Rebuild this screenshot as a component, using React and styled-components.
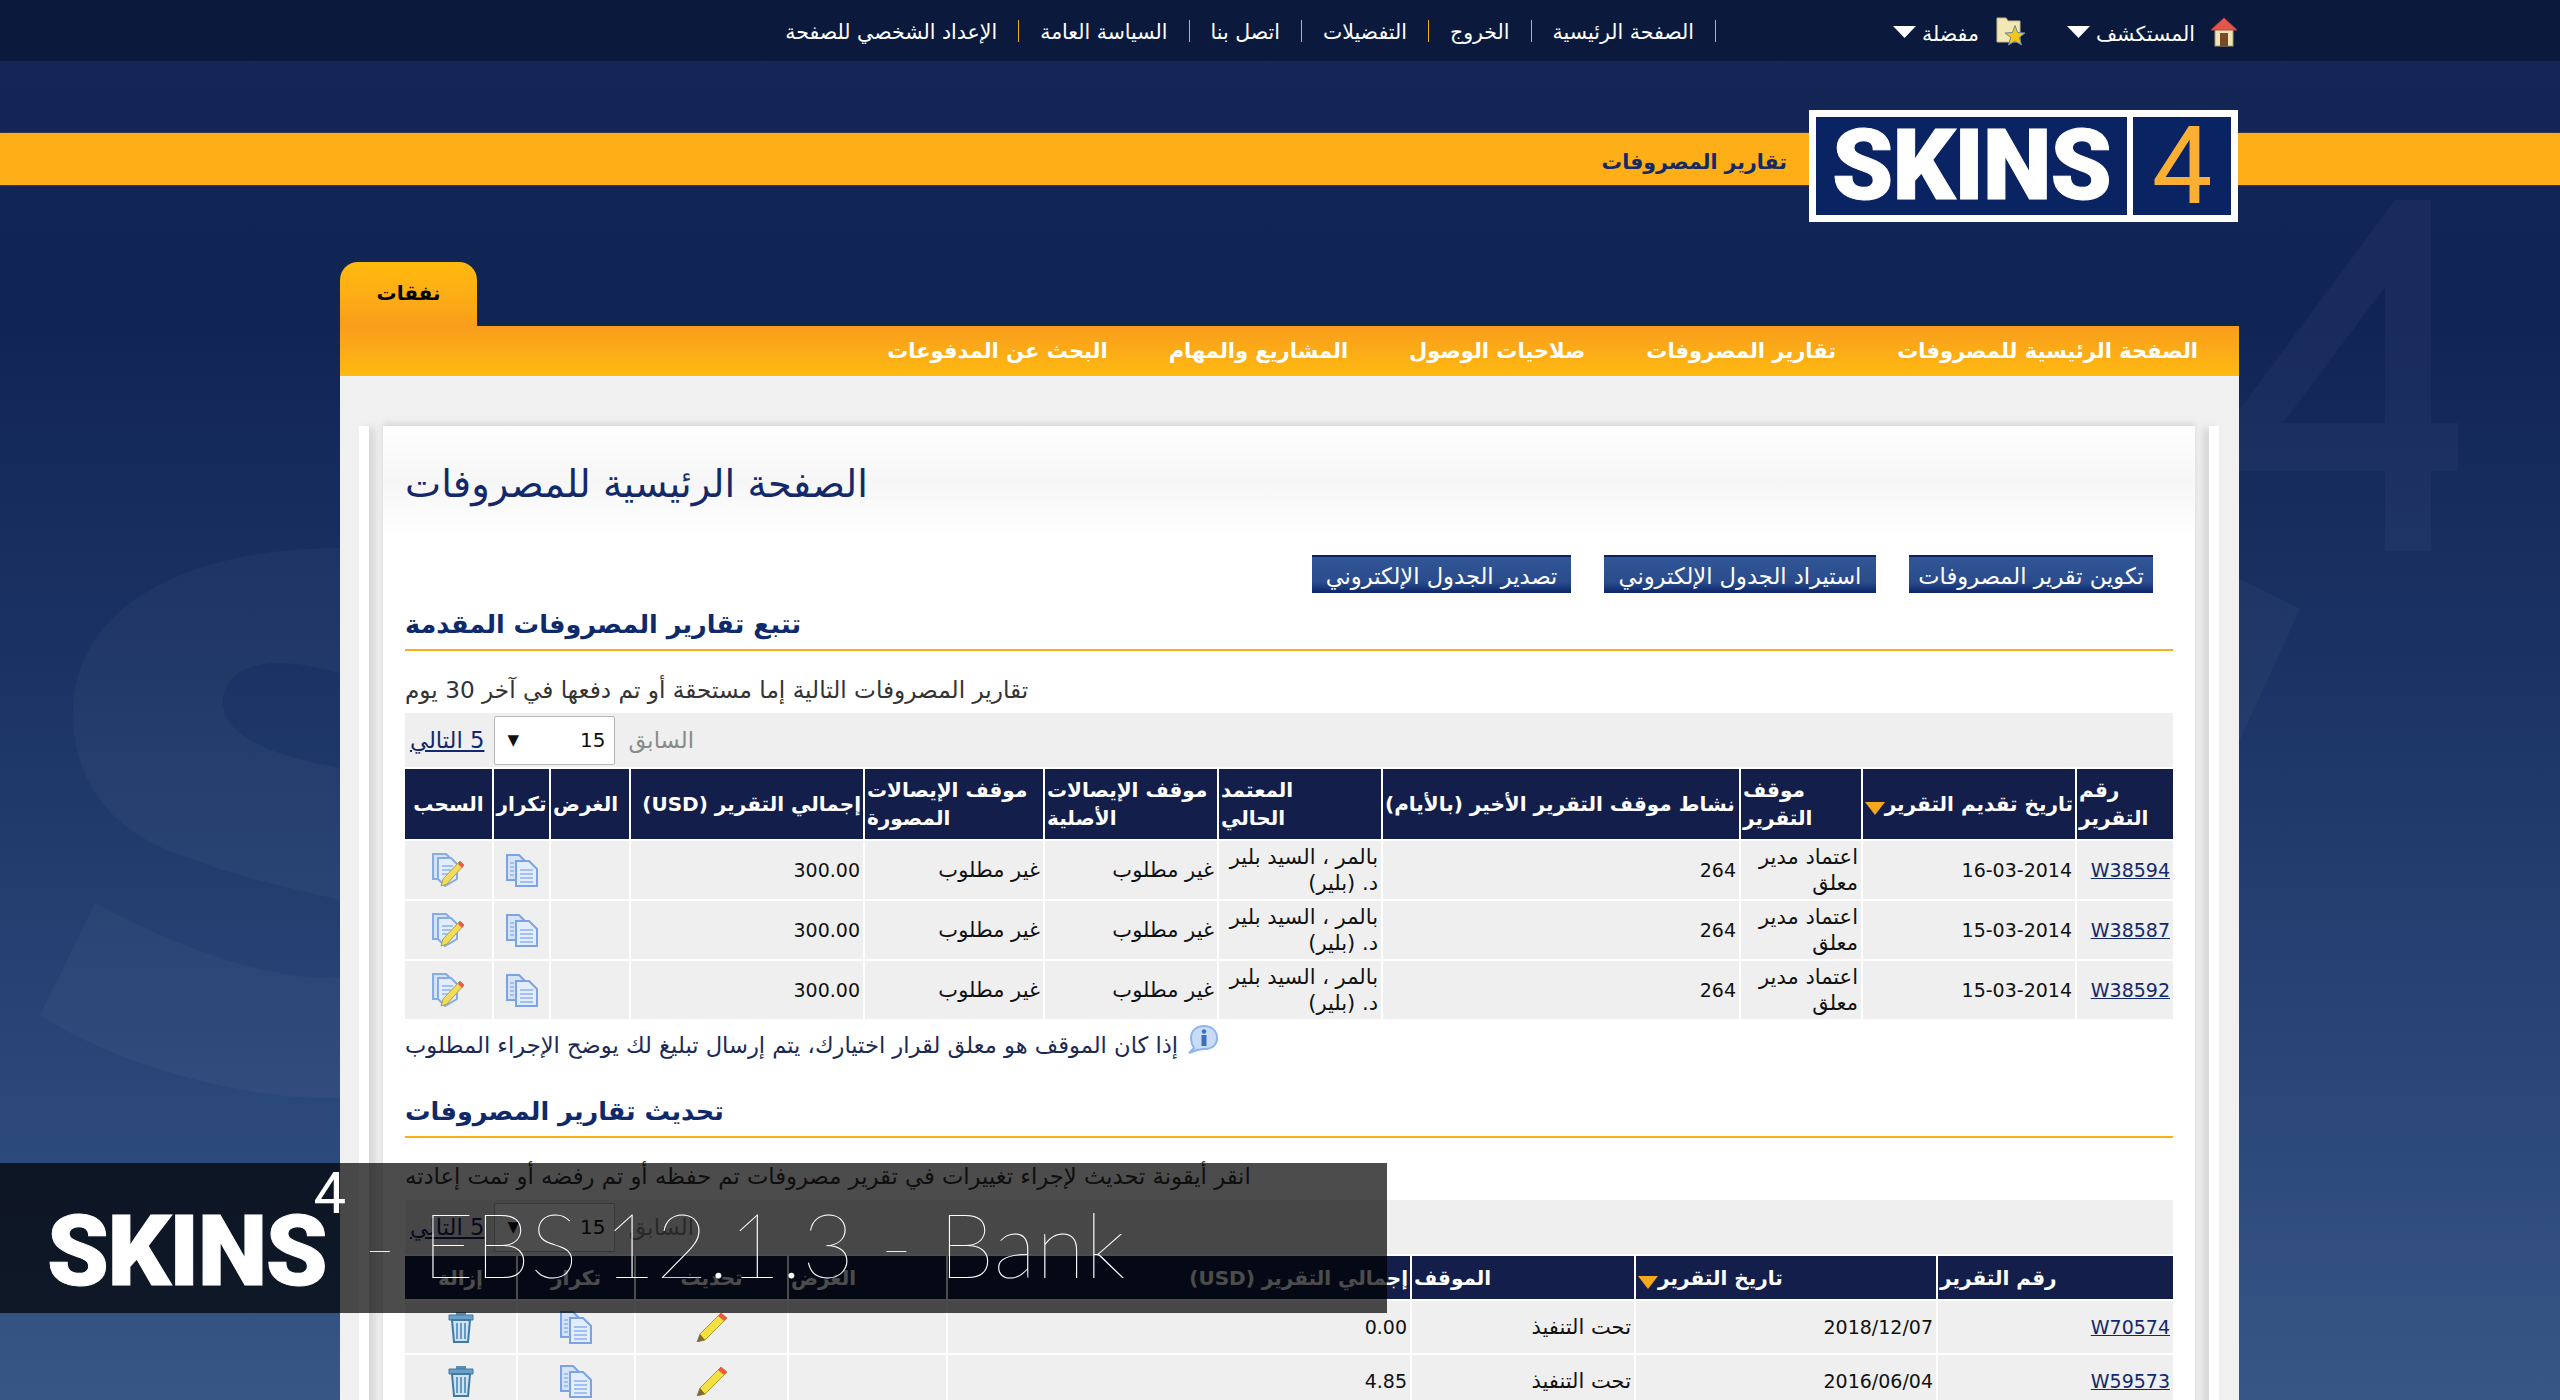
import React from 'react';
import styled, { createGlobalStyle } from 'styled-components';

const ARABIC = '"DejaVu Sans", "Noto Sans", sans-serif';

// === STYLES === //

const GlobalStyle = createGlobalStyle`
  html, body {
    margin: 0;
    padding: 0;
    height: 1400px;
    overflow: hidden;
    background: #13275a;
  }
  * { box-sizing: border-box; }
`;

const Page = styled.div`
  position: relative;
  width: 2560px;
  height: 1400px;
  overflow: hidden;
  font-family: ${ARABIC};
  background: linear-gradient(to bottom, #132656 0, #112555 320px, #1a3263 640px, #2d4a7c 1160px, #375685 1400px);
`;

const Watermark = styled.svg`
  position: absolute;
  inset: 0;
  width: 2560px;
  height: 1400px;
`;

const TopBar = styled.header`
  position: relative;
  display: flex;
  align-items: center;
  height: 61px;
  padding-right: 322px;
  background: #0b1a3c;
  color: #fff;
`;

const UserMenu = styled.div`
  display: flex;
  align-items: center;
  gap: 15px;
  margin-left: 41px;
  padding-top: 3px;
  font-size: 20.5px;
`;

const UserLabel = styled.span`
  margin-left: -9px;
  padding-top: 4px;
`;

const TopLinks = styled.nav`
  display: flex;
  align-items: center;
  margin-right: 136px;
`;

const TopLink = styled.a`
  height: 22px;
  padding: 0 21px;
  border-right: 1px solid #f5ab1e;
  font-size: 20.5px;
  line-height: 24px;
  color: #fff;
  white-space: nowrap;
`;

const Hero = styled.div`
  position: relative;
  height: 201px;
  padding-top: 72px;
`;

const YellowBar = styled.div`
  display: flex;
  align-items: center;
  height: 52px;
  padding: 6px 773px 0 0;
  background: #feae16;
  box-shadow: 0 0 2px #6b5a30;
  font-size: 20.5px;
  font-weight: bold;
  color: #142a63;
`;

const Logo = styled.div`
  position: absolute;
  top: 49px;
  right: 322px;
  display: flex;
  gap: 6px;
  width: 429px;
  height: 112px;
  padding: 7px;
  background: #fff;
  direction: ltr;
`;

const LogoPanel = styled.div`
  display: flex;
  align-items: center;
  justify-content: center;
  flex: ${(props) => (props.$grow ? 1 : '0 0 98px')};
  background: #0a2463;
  overflow: hidden;
  font-family: Roboto, sans-serif;
  font-weight: ${(props) => (props.$grow ? 900 : 400)};
  font-size: ${(props) => (props.$grow ? '98px' : '108px')};
  letter-spacing: ${(props) => (props.$grow ? '-1px' : '0')};
  -webkit-text-stroke: ${(props) => (props.$grow ? '1px #fff' : '0')};
  line-height: 1;
  color: ${(props) => (props.$grow ? '#fff' : '#fbb034')};
`;

const Shell = styled.div`
  position: relative;
  display: flex;
  flex-direction: column;
  width: 1899px;
  margin-right: 321px;
`;

const Tab = styled.div`
  align-self: flex-end;
  display: flex;
  align-items: center;
  justify-content: center;
  width: 137px;
  height: 64px;
  padding-bottom: 3px;
  border-radius: 18px 18px 0 0;
  background: linear-gradient(to bottom, #ffba0d, #fdae15 50%, #f99d1c);
  font-size: 20px;
  font-weight: bold;
  color: #000;
`;

const MainNav = styled.nav`
  display: flex;
  align-items: center;
  gap: 61px;
  height: 50px;
  padding-right: 41px;
  background: linear-gradient(to bottom, #f99d1c, #ffba12);
`;

const MainNavLink = styled.a`
  font-size: 21px;
  font-weight: bold;
  color: #fff;
  white-space: nowrap;
`;

const Body = styled.div`
  display: flex;
  gap: 14px;
  height: 1100px;
  padding: 50px 20px 0 19px;
  background: #f0f0f0;
`;

const Gutter = styled.div`
  flex: 0 0 10px;
  background: #fff;
  box-shadow: ${(props) => props.$shadow}px 0 8px -2px rgba(0, 0, 0, 0.18);
`;

const Main = styled.main`
  flex: 1;
  padding: 0 22px;
  background: linear-gradient(to bottom, #fff 0, #f6f6f6 55px, #fff 110px);
  box-shadow: 0 -3px 6px rgba(0, 0, 0, 0.1);
`;

const Title = styled.h1`
  display: flex;
  align-items: center;
  justify-content: flex-end;
  height: 114px;
  margin: 0;
  font-size: 38.4px;
  font-weight: normal;
  color: #13296a;
`;

const ButtonRow = styled.div`
  display: flex;
  gap: 33px;
  height: 38px;
  margin-top: 15px;
  padding-right: 20px;
`;

const Button = styled.div`
  width: ${(props) => props.$w}px;
  height: 38px;
  overflow: hidden;
  border-top: 2px solid #0b2163;
  background: linear-gradient(to bottom, #315595, #2a4c8d 70%, #0c2668);
  font-size: 22.6px;
  line-height: 38px;
  text-align: center;
  color: #fff;
  white-space: nowrap;
`;

const SectionHeading = styled.h2`
  display: flex;
  align-items: flex-end;
  justify-content: flex-end;
  height: ${(props) => props.$height}px;
  margin: 0;
  padding-bottom: 10px;
  border-bottom: 2px solid #feae16;
  font-size: 25.5px;
  font-weight: bold;
  color: #0f2a6a;
`;

const Description = styled.p`
  display: flex;
  align-items: center;
  justify-content: flex-end;
  height: 62px;
  margin: 0;
  padding-top: 14px;
  font-size: ${(props) => props.$size}px;
  color: #333;
`;

const Pager = styled.div`
  display: flex;
  align-items: center;
  justify-content: flex-end;
  height: 54px;
  padding-left: 5px;
  background: #efefef;
  font-size: 22.7px;
`;

const PrevLabel = styled.span`
  color: #8a8a8a;
`;

const PageSelect = styled.div`
  display: flex;
  align-items: center;
  justify-content: space-between;
  width: 121px;
  height: 49px;
  margin: 0 13px 0 10px;
  padding: 0 9px 0 12px;
  border: 1px solid #b8b8b8;
  border-radius: 2px;
  background: #fff;
  font-size: 20px;
  color: #111;
`;

const Arrow = styled.span`
  font-size: 15px;
`;

const Link = styled.a`
  color: #12296b;
  text-decoration: underline;
`;

const Table = styled.table`
  table-layout: fixed;
  width: 1772px;
  margin: 0 -2px;
  border-collapse: separate;
  border-spacing: 2px;
`;

const Head = styled.th`
  width: ${(props) => props.$w}px;
  height: ${(props) => props.$height}px;
  padding: 0 2px;
  background: #131f4a;
  font-size: 20px;
  font-weight: bold;
  line-height: 28px;
  text-align: ${(props) => props.$align || 'left'};
  white-space: ${(props) => (props.$nowrap ? 'nowrap' : 'pre-line')};
  color: #fff;
`;

const SortMark = styled.svg`
  width: 20px;
  height: 13px;
  vertical-align: -4px;
`;

const Cell = styled.td`
  height: ${(props) => props.$height}px;
  padding: 0 3px;
  background: #efefef;
  font-size: ${(props) => (props.$arabic ? '21px' : '19px')};
  line-height: 26px;
  text-align: right;
  color: #111;
  vertical-align: middle;

  svg {
    display: block;
    margin: 0 auto;
  }
`;

const Note = styled.div`
  display: flex;
  align-items: flex-start;
  justify-content: flex-end;
  gap: 10px;
  height: 51px;
  padding-top: 4px;
  font-size: 22.6px;
  color: #1a2a55;
`;

const NoteText = styled.span`
  padding-top: 7px;
`;

const Banner = styled.div`
  position: absolute;
  top: 1163px;
  left: 0;
  display: flex;
  align-items: center;
  width: 1387px;
  height: 150px;
  padding-left: 47px;
  background: rgba(0, 0, 0, 0.7);
  color: #fff;
  direction: ltr;
`;

const BannerLogo = styled.div`
  position: relative;
  margin-top: 26px;
  font-family: Roboto, sans-serif;
  font-size: 99px;
  font-weight: 900;
  letter-spacing: -1.5px;
  -webkit-text-stroke: 1px #fff;
  line-height: 1;
`;

const BannerFour = styled.span`
  position: absolute;
  top: -38px;
  right: -20px;
  font-size: 58px;
  font-weight: 400;
  letter-spacing: 0;
  -webkit-text-stroke: 0;
`;

const BannerTitle = styled.div`
  margin: 10px 0 0 37px;
  font-family: Lato, Roboto, sans-serif;
  font-size: 90px;
  font-weight: 100;
  line-height: 1;
  white-space: pre;
`;

// === ICONS === //

const HouseIcon = () => (
  <svg width="28" height="30" viewBox="0 0 28 30">
    <rect x="5" y="12" width="18" height="17" fill="#efe3b8" stroke="#a89a6c" />
    <rect x="10" y="16" width="8" height="13" fill="#7a4a26" />
    <path d="M14 1 L27 13 L1 13 Z" fill="#e2574c" stroke="#b9433a" />
  </svg>
);

const FolderStarIcon = () => (
  <svg width="32" height="30" viewBox="0 0 32 30">
    <path d="M3 1 h9 l2 3 h12 v21 H3 Z" fill="#f2e7b5" stroke="#c9b980" />
    <path d="M21 8.5 L23.6 15.5 L31 16 L25.3 20.5 L27.5 28 L21 24 L14.5 28 L16.7 20.5 L11 16 L18.4 15.5 Z" fill="#f5c518" stroke="#5f8aa8" />
  </svg>
);

const DownTriangle = () => (
  <svg width="23" height="12" viewBox="0 0 23 12">
    <path d="M0 0 H23 L11.5 12 Z" fill="#fff" />
  </svg>
);

const SortIcon = () => (
  <SortMark viewBox="0 0 20 13">
    <path d="M0 0 H20 L10 13 Z" fill="#f6a81c" />
  </SortMark>
);

const CopyIcon = () => (
  <svg width="34" height="34" viewBox="0 0 34 34">
    <path d="M2 2 h12 l5 5 v20 H2 Z" fill="#d5e3fa" stroke="#7ba3e6" strokeWidth="2" />
    <path d="M11 8 h13 l8 8 v17 H11 Z" fill="#e3edfc" stroke="#7ba3e6" strokeWidth="2" />
    <path d="M15 17 h13 M15 21 h13 M15 25 h13 M15 29 h13" stroke="#8fb3ec" strokeWidth="1.6" />
    <path d="M5 10 h4 M5 14 h4 M5 18 h4 M5 22 h4" stroke="#8fb3ec" strokeWidth="1.6" />
  </svg>
);

const EditDocIcon = () => (
  <svg width="34" height="34" viewBox="0 0 34 34">
    <path d="M1 1 h13 l5 5 v20 H1 Z" fill="#d5e3fa" stroke="#86abe8" strokeWidth="2" />
    <path d="M6 5 h13 l6 6 v15 l-12 7 L6 26 Z" fill="#e3edfc" stroke="#86abe8" strokeWidth="2" />
    <path d="M10 13 h11 M10 17 h9 M10 21 h6" stroke="#8fb3ec" strokeWidth="1.6" />
    <path d="M28 8 L32 12 L15 31 L9 33 L11 26 Z" fill="#f3dc5a" stroke="#a8a24a" />
    <path d="M28 8 L32 12 L30 15 L26 11 Z" fill="#ee5a44" />
  </svg>
);

const PencilIcon = () => (
  <svg width="32" height="30" viewBox="0 0 32 30">
    <path d="M25 1 L31 6 L9 28 L1 30 L4 22 Z" fill="#f5e042" stroke="#a89d3a" />
    <path d="M25 1 L31 6 L28 9 L22 4 Z" fill="#ea5a44" />
    <path d="M4 22 L9 28 L1 30 Z" fill="#7d6a3c" />
  </svg>
);

const TrashIcon = () => (
  <svg width="28" height="32" viewBox="0 0 28 32">
    <path d="M9 1 h10 v3 H9 Z" fill="#5a8db5" />
    <path d="M2 4 h24 v5 H2 Z" fill="#6d9fc6" stroke="#3f7aa5" />
    <path d="M5 9 h18 l-2 22 H7 Z" fill="#cfe3f2" stroke="#3f7aa5" strokeWidth="2" />
    <path d="M10 12 V28 M14 12 V28 M18 12 V28" stroke="#4d87b2" strokeWidth="1.6" />
  </svg>
);

const InfoIcon = () => (
  <svg width="31" height="29" viewBox="0 0 31 29">
    <path d="M16 1 C24 1 29 6 29 13 C29 20 24 24 16 24 L9 25 L1 28 L6 23 C4 20 3 17 3 13 C3 6 8 1 16 1 Z" fill="#c8dcf6" stroke="#8fb3ec" strokeWidth="2" />
    <circle cx="16" cy="6.5" r="2.2" fill="#3a6fc0" />
    <rect x="13.5" y="10" width="5" height="11" fill="#3a6fc0" />
  </svg>
);

// === DATA === //

const topLinks = [
  'الصفحة الرئيسية',
  'الخروج',
  'التفضيلات',
  'اتصل بنا',
  'السياسة العامة',
  'الإعداد الشخصي للصفحة'
];

const navLinks = [
  'الصفحة الرئيسية للمصروفات',
  'تقارير المصروفات',
  'صلاحيات الوصول',
  'المشاريع والمهام',
  'البحث عن المدفوعات'
];

const buttons = [
  { label: 'تكوين تقرير المصروفات', w: 244 },
  { label: 'استيراد الجدول الإلكتروني', w: 272 },
  { label: 'تصدير الجدول الإلكتروني', w: 259 }
];

const trackColumns = [
  { label: 'رقم التقرير', w: 96 },
  { label: 'تاريخ تقديم التقرير', w: 212, sorted: true, nowrap: true },
  { label: 'موقف التقرير', w: 120 },
  { label: 'نشاط موقف التقرير الأخير (بالأيام)', w: 356, nowrap: true },
  { label: 'المعتمد\nالحالي', w: 162 },
  { label: 'موقف الإيصالات الأصلية', w: 172 },
  { label: 'موقف الإيصالات المصورة', w: 178 },
  { label: 'إجمالي التقرير (USD)', w: 232, align: 'right' },
  { label: 'الغرض', w: 78 },
  { label: 'تكرار', w: 55, align: 'center' },
  { label: 'السحب', w: 87, align: 'center' }
];

const trackRows = [
  { id: 'W38594', date: '16-03-2014' },
  { id: 'W38587', date: '15-03-2014' },
  { id: 'W38592', date: '15-03-2014' }
];

const updateColumns = [
  { label: 'رقم التقرير', w: 235 },
  { label: 'تاريخ التقرير', w: 300, sorted: true },
  { label: 'الموقف', w: 222 },
  { label: 'إجمالي التقرير (USD)', w: 462, align: 'right' },
  { label: 'الغرض', w: 157 },
  { label: 'تحديث', w: 151, align: 'center' },
  { label: 'تكرار', w: 116, align: 'center' },
  { label: 'إزالة', w: 111, align: 'center' }
];

const updateRows = [
  { id: 'W70574', date: '2018/12/07', total: '0.00' },
  { id: 'W59573', date: '2016/06/04', total: '4.85' }
];

// === COMPONENTS === //

const PagerRow = () => (
  <Pager>
    <PrevLabel>السابق</PrevLabel>
    <PageSelect>
      <span>15</span>
      <Arrow>▼</Arrow>
    </PageSelect>
    <Link>5 التالي</Link>
  </Pager>
);

const HeaderRow = ({ columns, height }) => (
  <thead>
    <tr>
      {columns.map((col) => (
        <Head key={col.label} $w={col.w} $height={height} $align={col.align} $nowrap={col.nowrap}>
          {col.label}
          {col.sorted && <SortIcon />}
        </Head>
      ))}
    </tr>
  </thead>
);

const App = () => (
  <Page dir="rtl">
    <GlobalStyle />
    <Watermark viewBox="0 0 2560 1400">
      <g fill="#fff" fillOpacity="0.03">
        <path
          d="M340 548 C180 548 73 610 73 713 C73 770 100 830 187 857 C230 875 290 888 340 900 L340 768 C300 760 223 745 223 702 C223 675 250 663 277 663 C300 663 320 668 340 673 Z"
        />
        <path d="M95 903 L40 1015 C133 1075 267 1101 340 1098 L340 977 C293 983 200 960 95 903 Z" />
        <path d="M2395 200 L2431 200 L2431 423 L2458 423 L2458 471 L2431 471 L2431 551 L2385 551 L2385 471 L2239 471 L2239 410 Z M2385 287 L2283 423 L2385 423 Z" fillRule="evenodd" />
        <path d="M2239 578 L2300 609 L2239 742 Z" />
      </g>
    </Watermark>

    <TopBar>
      <UserMenu>
        <HouseIcon />
        <UserLabel>المستكشف</UserLabel>
        <DownTriangle />
      </UserMenu>
      <UserMenu>
        <FolderStarIcon />
        <UserLabel>مفضلة</UserLabel>
        <DownTriangle />
      </UserMenu>
      <TopLinks>
        {topLinks.map((label) => (
          <TopLink key={label}>{label}</TopLink>
        ))}
      </TopLinks>
    </TopBar>

    <Hero>
      <YellowBar>تقارير المصروفات</YellowBar>
      <Logo>
        <LogoPanel $grow>SKINS</LogoPanel>
        <LogoPanel>4</LogoPanel>
      </Logo>
    </Hero>

    <Shell>
      <Tab>نفقات</Tab>
      <MainNav>
        {navLinks.map((label) => (
          <MainNavLink key={label}>{label}</MainNavLink>
        ))}
      </MainNav>
      <Body>
        <Gutter $shadow={-6} />
        <Main>
          <Title>الصفحة الرئيسية للمصروفات</Title>
          <ButtonRow>
            {buttons.map((button) => (
              <Button key={button.label} $w={button.w}>{button.label}</Button>
            ))}
          </ButtonRow>

          <SectionHeading $height={58}>تتبع تقارير المصروفات المقدمة</SectionHeading>
          <Description $size={23.2}>تقارير المصروفات التالية إما مستحقة أو تم دفعها في آخر 30 يوم</Description>
          <PagerRow />
          <Table>
            <HeaderRow columns={trackColumns} height={70} />
            <tbody>
              {trackRows.map((row) => (
                <tr key={row.id}>
                  <Cell $height={58}><Link>{row.id}</Link></Cell>
                  <Cell>{row.date}</Cell>
                  <Cell $arabic>اعتماد مدير معلق</Cell>
                  <Cell>264</Cell>
                  <Cell $arabic>بالمر ، السيد بلير د. (بلير)</Cell>
                  <Cell $arabic>غير مطلوب</Cell>
                  <Cell $arabic>غير مطلوب</Cell>
                  <Cell>300.00</Cell>
                  <Cell />
                  <Cell><CopyIcon /></Cell>
                  <Cell><EditDocIcon /></Cell>
                </tr>
              ))}
            </tbody>
          </Table>
          <Note>
            <InfoIcon />
            <NoteText>إذا كان الموقف هو معلق لقرار اختيارك، يتم إرسال تبليغ لك يوضح الإجراء المطلوب</NoteText>
          </Note>

          <SectionHeading $height={66}>تحديث تقارير المصروفات</SectionHeading>
          <Description $size={22.7}>انقر أيقونة تحديث لإجراء تغييرات في تقرير مصروفات تم حفظه أو تم رفضه أو تمت إعادته</Description>
          <PagerRow />
          <Table>
            <HeaderRow columns={updateColumns} height={43} />
            <tbody>
              {updateRows.map((row) => (
                <tr key={row.id}>
                  <Cell $height={52}><Link>{row.id}</Link></Cell>
                  <Cell>{row.date}</Cell>
                  <Cell $arabic>تحت التنفيذ</Cell>
                  <Cell>{row.total}</Cell>
                  <Cell />
                  <Cell><PencilIcon /></Cell>
                  <Cell><CopyIcon /></Cell>
                  <Cell><TrashIcon /></Cell>
                </tr>
              ))}
            </tbody>
          </Table>
        </Main>
        <Gutter $shadow={6} />
      </Body>
    </Shell>

    <Banner>
      <BannerLogo>
        SKINS
        <BannerFour>4</BannerFour>
      </BannerLogo>
      <BannerTitle>- EBS 12.1.3 - Bank</BannerTitle>
    </Banner>
  </Page>
);

export default App;
